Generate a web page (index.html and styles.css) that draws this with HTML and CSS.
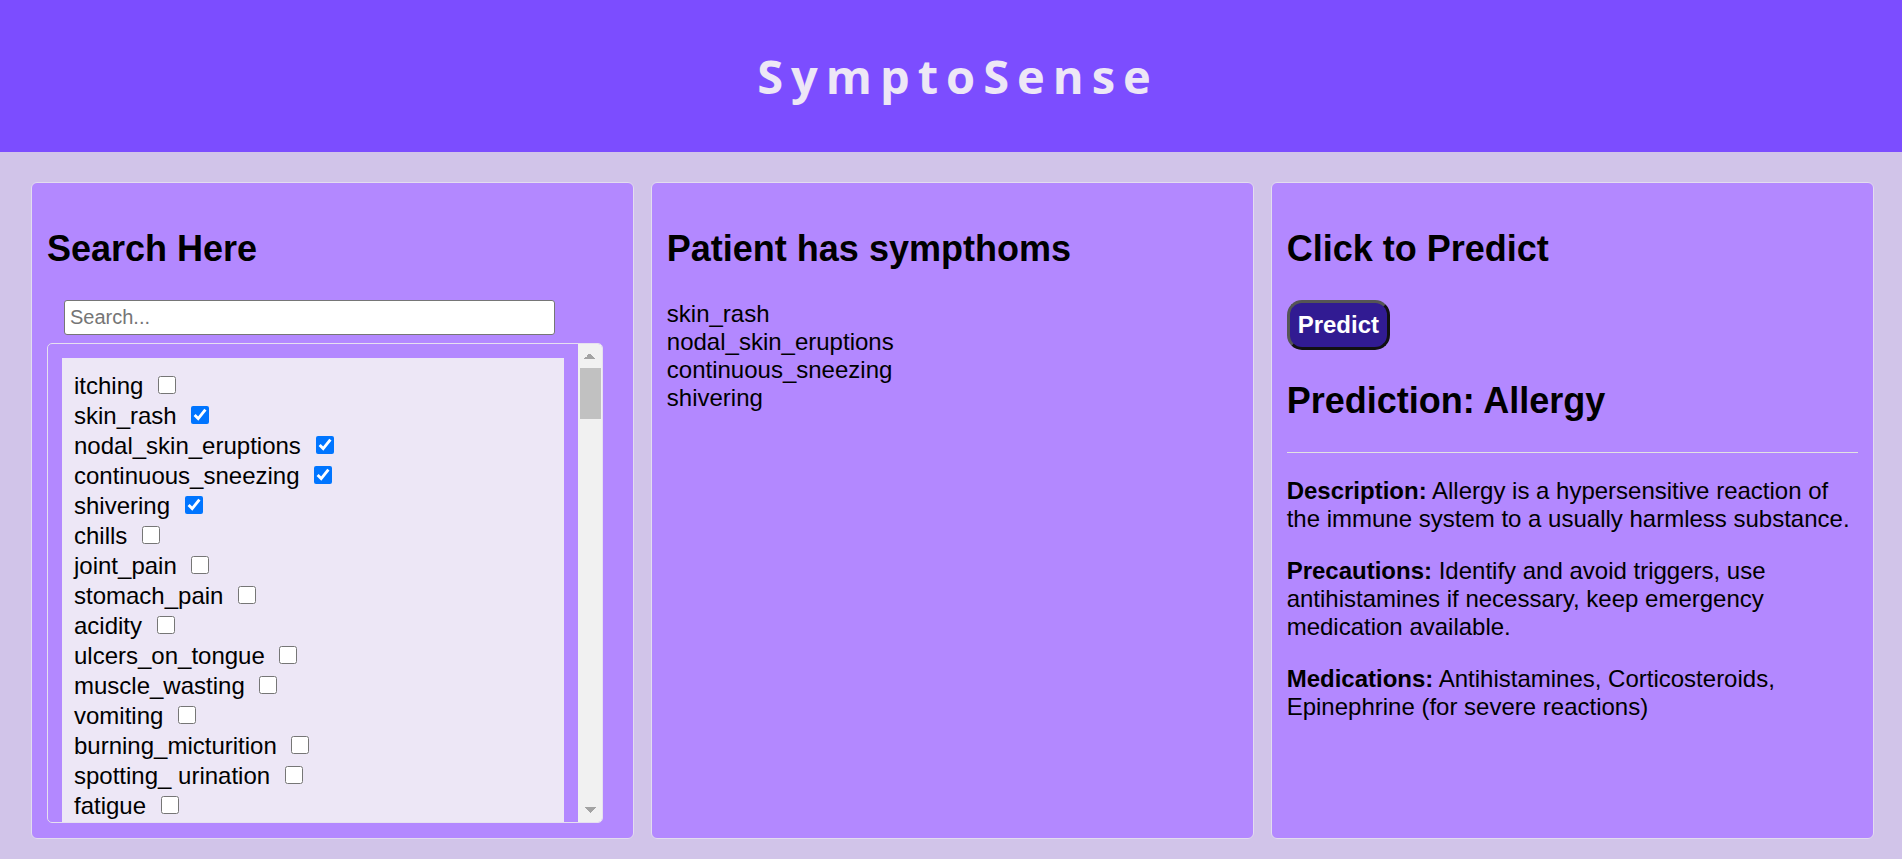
FILE: index.html
```html
<!DOCTYPE html>
<html lang="en">
<head>
<meta charset="utf-8">
<title>SymptoSense</title>
<link rel="stylesheet" href="styles.css">
</head>
<body>
<header class="topbar">
  <h1 class="brand">SymptoSense</h1>
</header>
<main class="panels">
  <section class="card">
    <h2 class="card-title">Search Here</h2>
    <input class="search" type="text" placeholder="Search...">
    <div class="list-box">
      <div class="list-viewport">
        <div class="symptom-list">
          <label class="row">itching <input type="checkbox"></label>
          <label class="row">skin_rash <input type="checkbox" checked></label>
          <label class="row">nodal_skin_eruptions <input type="checkbox" checked></label>
          <label class="row">continuous_sneezing <input type="checkbox" checked></label>
          <label class="row">shivering <input type="checkbox" checked></label>
          <label class="row">chills <input type="checkbox"></label>
          <label class="row">joint_pain <input type="checkbox"></label>
          <label class="row">stomach_pain <input type="checkbox"></label>
          <label class="row">acidity <input type="checkbox"></label>
          <label class="row">ulcers_on_tongue <input type="checkbox"></label>
          <label class="row">muscle_wasting <input type="checkbox"></label>
          <label class="row">vomiting <input type="checkbox"></label>
          <label class="row">burning_micturition <input type="checkbox"></label>
          <label class="row">spotting_ urination <input type="checkbox"></label>
          <label class="row">fatigue <input type="checkbox"></label>
          <label class="row">weight_gain <input type="checkbox"></label>
          <label class="row">anxiety <input type="checkbox"></label>
          <label class="row">cold_hands_and_feets <input type="checkbox"></label>
        </div>
      </div>
      <div class="scrollbar" aria-hidden="true">
        <div class="sb-btn sb-up"></div>
        <div class="sb-thumb"></div>
        <div class="sb-track"></div>
        <div class="sb-btn sb-down"></div>
      </div>
    </div>
  </section>

  <section class="card">
    <h2 class="card-title">Patient has sympthoms</h2>
    <div class="selected">
      <div>skin_rash</div>
      <div>nodal_skin_eruptions</div>
      <div>continuous_sneezing</div>
      <div>shivering</div>
    </div>
  </section>

  <section class="card">
    <h2 class="card-title">Click to Predict</h2>
    <button class="predict-btn" type="button">Predict</button>
    <h2 class="card-title">Prediction: Allergy</h2>
    <hr class="divider">
    <p class="info"><strong>Description:</strong> Allergy is a hypersensitive reaction of the immune system to a usually harmless substance.</p>
    <p class="info"><strong>Precautions:</strong> Identify and avoid triggers, use antihistamines if necessary, keep emergency medication available.</p>
    <p class="info"><strong>Medications:</strong> Antihistamines, Corticosteroids, Epinephrine (for severe reactions)</p>
  </section>
</main>
</body>
</html>
```

FILE: styles.css
```css
* {
  box-sizing: border-box;
}

html, body {
  margin: 0;
  padding: 0;
}

body {
  background: #d1c4e9;
  font-family: "Liberation Sans", Arial, sans-serif;
  font-size: 24px;
  color: #000;
}

.topbar {
  height: 152px;
  background: #7c4dff;
  display: flex;
  align-items: center;
  justify-content: center;
}

.brand {
  margin: 0;
  padding-left: 14px;
  font-family: "Open Sans", "Noto Sans", sans-serif;
  font-weight: 700;
  font-size: 47px;
  letter-spacing: 8px;
  color: #ede7f6;
  line-height: 1;
}

.panels {
  display: flex;
  align-items: stretch;
  gap: 16.5px;
  padding: 30px 28px 20px 31px;
}

.card {
  flex: 1 1 0;
  min-width: 0;
  background: #b388ff;
  border: 1px solid #e3dcef;
  border-radius: 6px;
  padding: 15px;
}

.card-title {
  font-size: 36px;
  font-weight: bold;
  margin: 29.88px 0;
}

.search {
  display: block;
  width: 491px;
  height: 35px;
  margin: 0 0 8px 17px;
  padding: 0 5px;
  font-family: "Liberation Sans", Arial, sans-serif;
  font-size: 20px;
  border: 1px solid #767676;
  border-radius: 3px;
  background: #fff;
  color: #000;
}

.search::placeholder {
  color: #757575;
}

.list-box {
  display: flex;
  width: 556px;
  height: 480px;
  overflow: hidden;
  border: 1px solid #e6e0f0;
  border-radius: 5px;
}

.list-viewport {
  flex: 1 1 auto;
  min-width: 0;
  overflow: hidden;
  padding: 14px 14px 0 14px;
}

.symptom-list {
  background: #ede7f6;
  padding: 13px 12px;
}

.row {
  display: block;
  line-height: 30px;
  white-space: nowrap;
}

.row input {
  width: 18px;
  height: 18px;
  margin: 0 0 1px 8px;
  vertical-align: baseline;
}

.scrollbar {
  flex: 0 0 24px;
  display: flex;
  flex-direction: column;
  background: #f1f1f1;
}

.sb-btn {
  flex: 0 0 24px;
  background-repeat: no-repeat;
}

.sb-up {
  background-image:
    linear-gradient(to top left, #a3a3a3 50%, transparent 50%),
    linear-gradient(to top right, #a3a3a3 50%, transparent 50%);
  background-size: 6px 6px, 6px 6px;
  background-position: 6px 9px, 12px 9px;
}

.sb-down {
  background-image:
    linear-gradient(to bottom left, #a3a3a3 50%, transparent 50%),
    linear-gradient(to bottom right, #a3a3a3 50%, transparent 50%);
  background-size: 6px 6px, 6px 6px;
  background-position: 6px 9px, 12px 9px;
}

.sb-thumb {
  flex: 0 0 51px;
  margin: 0 1px 0 2px;
  background: #c1c1c1;
}

.sb-track {
  flex: 1 1 auto;
}

.selected {
  line-height: normal;
}

.predict-btn {
  display: block;
  height: 50px;
  padding: 0 8px;
  font-family: "Liberation Sans", Arial, sans-serif;
  font-size: 24px;
  font-weight: bold;
  color: #fff;
  background: #311b92;
  border: 3px solid;
  border-color: #555 #111 #111 #555;
  border-radius: 15px;
}

.divider {
  height: 0;
  border: 0;
  border-top: 1px solid #e2e2e2;
  margin: 8px 0;
}

.info {
  margin: 24px 0;
}
```
